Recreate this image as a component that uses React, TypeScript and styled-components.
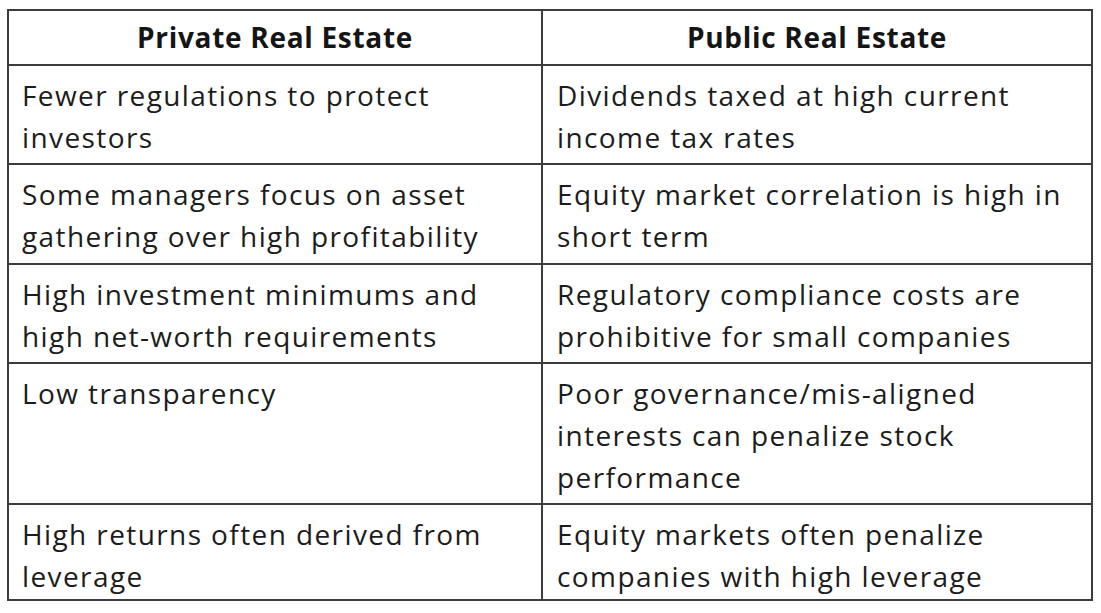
import React from "react";
import styled, { createGlobalStyle } from "styled-components";

const Global = createGlobalStyle`
  html, body { margin: 0; padding: 0; background: #ffffff; }
  body { font-family: "Open Sans", "Noto Sans", sans-serif; }
`;

const Table = styled.div`
  margin: 9px 0 0 7px;
  width: 1086px;
  box-sizing: border-box;
  display: grid;
  grid-template-columns: 532px 548px;
  grid-template-rows: 53px 97px 98px 97px 139px 94px;
  gap: 2px;
  padding: 2px;
  background: #3c3c3c;
`;

const HeadCell = styled.div`
  background: #ffffff;
  display: flex;
  align-items: center;
  justify-content: center;
  font-weight: 700;
  font-size: 28px;
  letter-spacing: 0.7px;
  color: #151515;
  padding-bottom: 2px;
`;

const Cell = styled.div<{ $pl: number }>`
  background: #ffffff;
  padding: 8px 0 0 ${(p) => p.$pl}px;
  font-size: 28px;
  letter-spacing: 1.4px;
  line-height: 42px;
  color: #1c1c1c;
  white-space: nowrap;
`;

const rows: [string[], string[]][] = [
  [["Fewer regulations to protect", "investors"], ["Dividends taxed at high current", "income tax rates"]],
  [["Some managers focus on asset", "gathering over high profitability"], ["Equity market correlation is high in", "short term"]],
  [["High investment minimums and", "high net-worth requirements"], ["Regulatory compliance costs are", "prohibitive for small companies"]],
  [["Low transparency"], ["Poor governance/mis-aligned", "interests can penalize stock", "performance"]],
  [["High returns often derived from", "leverage"], ["Equity markets often penalize", "companies with high leverage"]],
];

const Lines = ({ lines }: { lines: string[] }) => (
  <>
    {lines.map((l, i) => (
      <React.Fragment key={i}>
        {i > 0 && <br />}
        {l}
      </React.Fragment>
    ))}
  </>
);

export default function App() {
  return (
    <>
      <Global />
      <Table>
        <HeadCell>Private Real Estate</HeadCell>
        <HeadCell>Public Real Estate</HeadCell>
        {rows.map(([a, b], i) => (
          <React.Fragment key={i}>
            <Cell $pl={13}>
              <Lines lines={a} />
            </Cell>
            <Cell $pl={14}>
              <Lines lines={b} />
            </Cell>
          </React.Fragment>
        ))}
      </Table>
    </>
  );
}
